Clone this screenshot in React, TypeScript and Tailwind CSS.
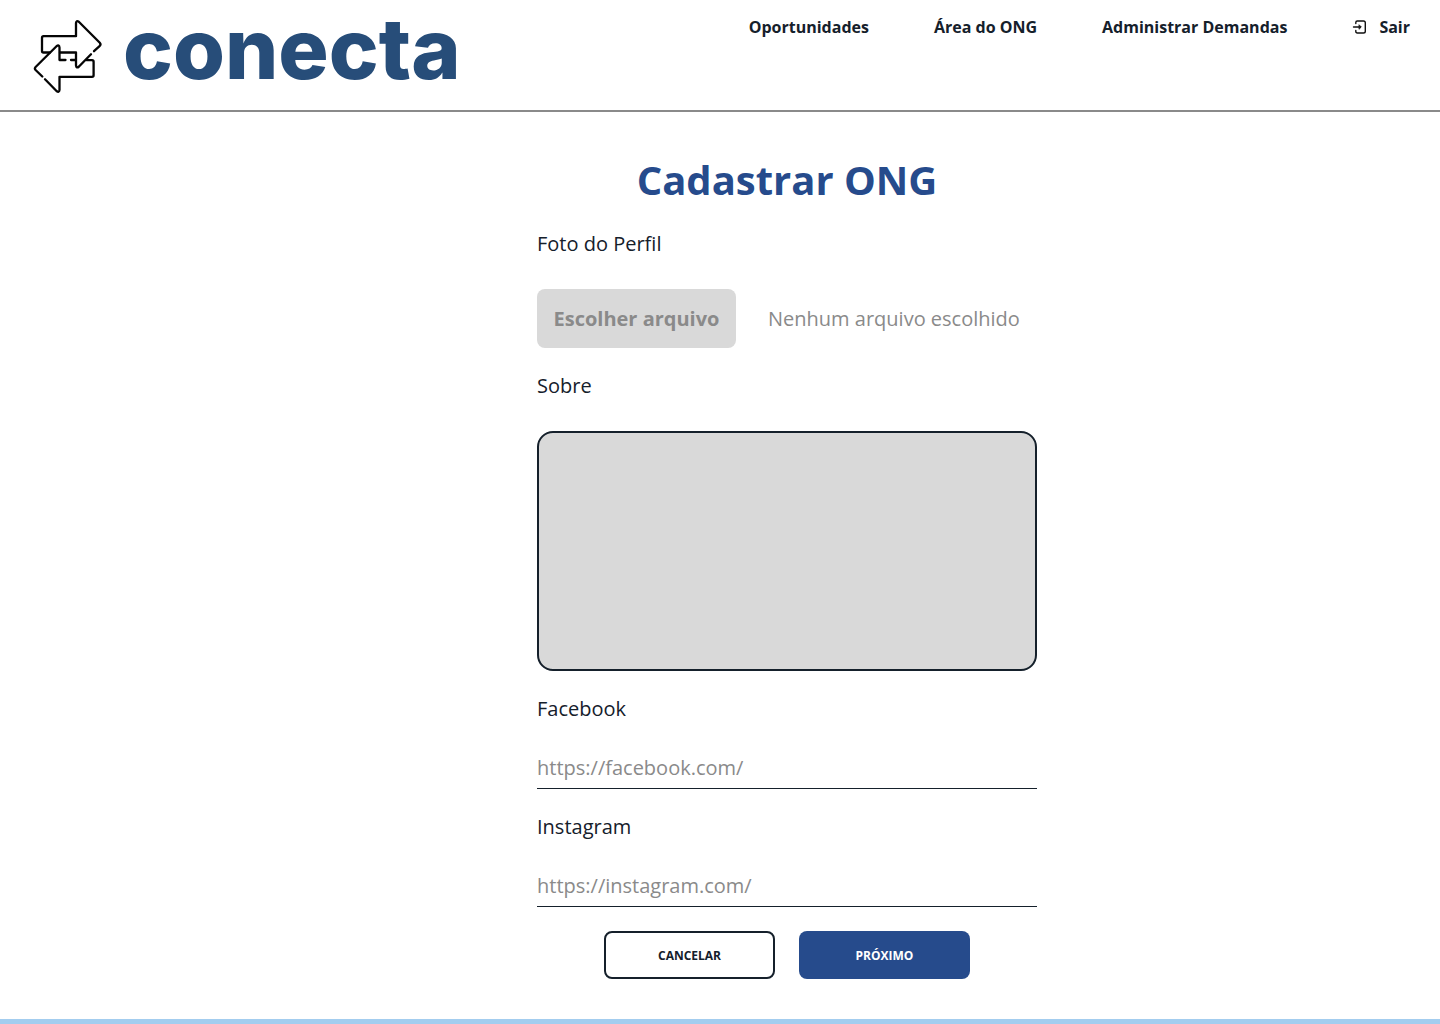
import { useRef, useState } from "react";

const navLink = "hover:underline";

function ArrowsLogo() {
  return (
    <svg
      aria-hidden="true"
      className="h-[76px] w-[70px] shrink-0"
      viewBox="33 19 70 76"
      fill="none"
      stroke="#050505"
      strokeWidth="2.3"
      strokeLinecap="round"
      strokeLinejoin="round"
    >
      <path d="M50 52.500H43.500Q42 52.500 42 51V37.800Q42 36.200 43.600 36.200H76V23Q76.300 20 78.800 21.800L99.800 42.800Q101.200 44.300 99.800 45.800L94 51.200" />
      <path d="M91 54.200L79 66.500Q76.300 68.800 76 65.500V52.500H60" />
      <path d="M75.500 60H71M65.500 60H59.500V47.500Q59.200 44.300 56.500 46.200L35.600 67Q34.200 68.500 35.600 70L42.300 76.500" />
      <path d="M45 79.300L56.500 91Q59.200 93 59.500 90V76.800H92Q93.600 76.800 93.600 75.200V61.800Q93.600 60.200 92 60.200H86.500" />
    </svg>
  );
}

function ExitIcon() {
  return (
    <svg
      aria-hidden="true"
      className="size-4"
      viewBox="0 0 16 16"
      fill="none"
      stroke="#111"
      strokeWidth="1.4"
      strokeLinecap="round"
      strokeLinejoin="round"
    >
      <path d="M3.800 4.500V3.500Q3.800 2 5.300 2H11.500Q13.300 2 13.300 3.800V12.200Q13.300 14 11.500 14H5.300Q3.800 14 3.800 12.500V11.500" />
      <path d="M1.500 8H8" />
      <path d="M7.300 6L9.300 8L7.300 10Z" fill="#111" strokeWidth="0.8" />
    </svg>
  );
}

function LinkField({ id, label, placeholder }: { id: string; label: string; placeholder: string }) {
  return (
    <div className="flex flex-col gap-8">
      <label htmlFor={id}>{label}</label>
      <input
        id={id}
        type="url"
        placeholder={placeholder}
        className="h-[35px] w-full border-b border-[#15202b] bg-transparent pb-[7px] outline-none placeholder:text-[#8a8a8a]"
      />
    </div>
  );
}

export default function App() {
  const fileInput = useRef<HTMLInputElement>(null);
  const [fileName, setFileName] = useState("");

  return (
    <div className="flex min-h-screen flex-col bg-white font-['Open_Sans',sans-serif] text-[#15202b]">
      <header className="flex items-start justify-between border-b-2 border-[#8a8a8a] pr-[30px] pl-[33px]">
        <a href="#" className="flex h-[110px] items-center gap-5 pt-1">
          <ArrowsLogo />
          <span className="pb-4 font-['Inter',sans-serif] text-[84px] leading-[110px] font-extrabold text-[#274d79]">
            conecta
          </span>
        </a>
        <nav className="flex items-center gap-[65px] pt-4 text-base leading-[22px] font-bold">
          <a href="#" className={navLink}>Oportunidades</a>
          <a href="#" className={navLink}>Área do ONG</a>
          <a href="#" className={navLink}>Administrar Demandas</a>
          <a href="#" className="flex items-center gap-[11px] hover:underline">
            <ExitIcon />
            Sair
          </a>
        </nav>
      </header>

      <main className="flex flex-1 justify-center pt-10 pb-10 pl-[134px]">
        <form
          className="flex w-full max-w-[500px] flex-col gap-6 text-xl leading-[27px]"
          onSubmit={(event) => event.preventDefault()}
        >
          <h1 className="pt-0.5 text-center text-[40px] leading-[52px] font-bold text-[#264b8c]">
            Cadastrar ONG
          </h1>

          <div className="flex flex-col gap-8">
            <label htmlFor="foto">Foto do Perfil</label>
            <div className="flex items-center gap-8">
              <button
                type="button"
                onClick={() => fileInput.current?.click()}
                className="w-[199px] rounded-lg bg-[#d9d9d9] py-4 font-bold text-[#8a8a8a]"
              >
                Escolher arquivo
              </button>
              <span className="text-[#8a8a8a]">
                {fileName || "Nenhum arquivo escolhido"}
              </span>
              <input
                ref={fileInput}
                id="foto"
                type="file"
                className="hidden"
                onChange={(event) => setFileName(event.target.files?.[0]?.name ?? "")}
              />
            </div>
          </div>

          <div className="flex flex-col gap-8">
            <label htmlFor="sobre">Sobre</label>
            <textarea
              id="sobre"
              className="block h-60 w-full resize-none rounded-2xl border-2 border-[#15202b] bg-[#d9d9d9] p-4 outline-none"
            />
          </div>

          <LinkField id="facebook" label="Facebook" placeholder="https://facebook.com/" />
          <LinkField id="instagram" label="Instagram" placeholder="https://instagram.com/" />

          <div className="flex justify-center gap-6 text-xs leading-[17px] font-bold">
            <button type="button" className="h-12 w-[171px] rounded-lg border-2 border-[#15202b]">
              CANCELAR
            </button>
            <button type="submit" className="h-12 w-[171px] rounded-lg bg-[#264b8c] text-white">
              PRÓXIMO
            </button>
          </div>
        </form>
      </main>

      <footer className="h-[5px] bg-[#a3cdef]" />
    </div>
  );
}
